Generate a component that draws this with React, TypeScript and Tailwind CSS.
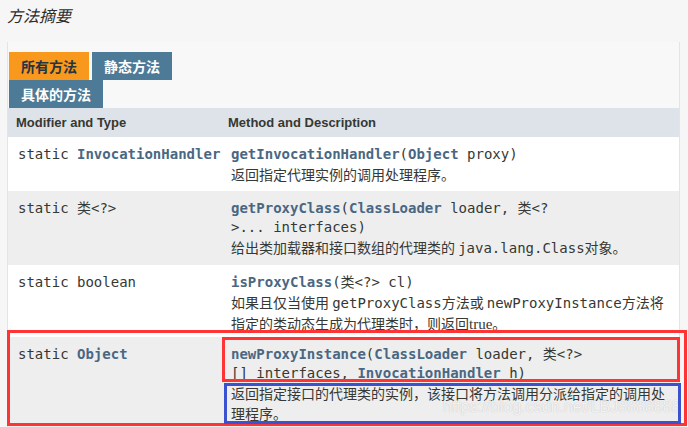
import React from "react";

const mono = "font-['DejaVu_Sans_Mono','Noto_Sans_CJK_SC',monospace]";
const cjk = "font-['Noto_Sans_CJK_SC','Liberation_Sans',sans-serif]";

function L({ children }: { children: React.ReactNode }) {
  return <span className="font-bold text-[#4a6782]">{children}</span>;
}

function Row({
  bg,
  left,
  code,
  desc,
  pb,
}: {
  bg: string;
  left: React.ReactNode;
  code: React.ReactNode;
  desc: React.ReactNode;
  pb: string;
}) {
  return (
    <div className={`flex ${bg}`}>
      <div className={`w-[213px] shrink-0 pl-[10px] pt-2 ${mono} text-[14px] leading-[19px] whitespace-nowrap text-[#353833]`}>
        {left}
      </div>
      <div className={`flex-1 pl-[10px] pt-2 ${pb}`}>
        <div className={`${mono} text-[14px] leading-[19px] whitespace-nowrap text-[#353833]`}>{code}</div>
        <div className={`${cjk} text-[14px] leading-[20px] whitespace-nowrap text-[#353833]`}>{desc}</div>
      </div>
    </div>
  );
}

export default function App() {
  return (
    <div className="relative w-[688px] h-[427px] overflow-hidden bg-[#f6f6f6]">
      <div className={`h-[42px] pl-[7px] pt-[4px] ${cjk} italic text-[16px] leading-[22px] text-[#2c2c2c]`}>
        方法摘要
      </div>
      <div className="ml-[7px] w-[673px] border-x border-[#e4e4e4] bg-[#f8f8f8] pt-[10px]">
        <div className={`flex gap-[3px] pl-px ${cjk} text-[14px] font-bold leading-[28px]`}>
          <div className="h-[28px] w-[80px] bg-[#f8981d] text-center text-[#253441]">所有方法</div>
          <div className="h-[28px] w-[80px] bg-[#4d7a97] text-center text-white">静态方法</div>
        </div>
        <div className={`flex pl-px ${cjk} text-[14px] font-bold leading-[28px]`}>
          <div className="h-[28px] w-[94px] bg-[#4d7a97] text-center text-white">具体的方法</div>
        </div>
        <div className="flex h-[29px] items-center bg-[#dee3e9] font-['Liberation_Sans',Arial,sans-serif] text-[13px] font-bold text-[#353833]">
          <div className="w-[213px] shrink-0 pl-[8px]">Modifier and Type</div>
          <div className="pl-[7px]">Method and Description</div>
        </div>
        <Row
          bg="bg-white"
          pb="pb-[7px]"
          left={
            <>
              static <L>InvocationHandler</L>
            </>
          }
          code={
            <>
              <L>getInvocationHandler</L>(<L>Object</L> proxy)
            </>
          }
          desc={<>返回指定代理实例的调用处理程序。</>}
        />
        <Row
          bg="bg-[#eeeeef]"
          pb="pb-[7px]"
          left={<>static 类&lt;?&gt;</>}
          code={
            <>
              <L>getProxyClass</L>(<L>ClassLoader</L> loader, 类&lt;?
              <br />
              &gt;... interfaces)
            </>
          }
          desc={
            <>
              给出类加载器和接口数组的代理类的 <span className={mono}>java.lang.Class</span>对象。
            </>
          }
        />
        <Row
          bg="bg-white"
          pb="pb-[3px]"
          left={<>static boolean</>}
          code={
            <>
              <L>isProxyClass</L>(类&lt;?&gt; cl)
            </>
          }
          desc={
            <>
              如果且仅当使用 <span className={mono}>getProxyClass</span>方法或 <span className={mono}>newProxyInstance</span>方法将
              <br />
              指定的类动态生成为代理类时，则返回<span className="font-['Liberation_Serif',serif] text-[15px]">true</span>。
            </>
          }
        />
        <Row
          bg="bg-[#eeeeef]"
          pb="pb-[20px]"
          left={
            <>
              static <L>Object</L>
            </>
          }
          code={
            <>
              <L>newProxyInstance</L>(<L>ClassLoader</L> loader, 类&lt;?&gt;
              <br />
              [] interfaces, <L>InvocationHandler</L> h)
            </>
          }
          desc={
            <>
              返回指定接口的代理类的实例，该接口将方法调用分派给指定的调用处
              <br />
              理程序。
            </>
          }
        />
      </div>

      {/* watermark */}
      <div className="pointer-events-none absolute left-[443px] top-[397px] font-['Liberation_Sans',Arial,sans-serif] text-[16px] leading-[20px] text-white/80 [text-shadow:0_0_1px_rgba(0,0,0,0.25)]">
        https://blog.csdn.net/LBJ8888888
      </div>

      {/* annotation boxes */}
      <div className="pointer-events-none absolute left-[7px] top-[330px] h-[96px] w-[680px] border-[3px] border-[#ff3535]" />
      <div className="pointer-events-none absolute left-[222px] top-[337px] h-[45px] w-[458px] border-[3px] border-[#ff3535]" />
      <div className="pointer-events-none absolute left-[224px] top-[383px] h-[41px] w-[457px] border-[3px] border-[#3b52cf]" />
    </div>
  );
}
